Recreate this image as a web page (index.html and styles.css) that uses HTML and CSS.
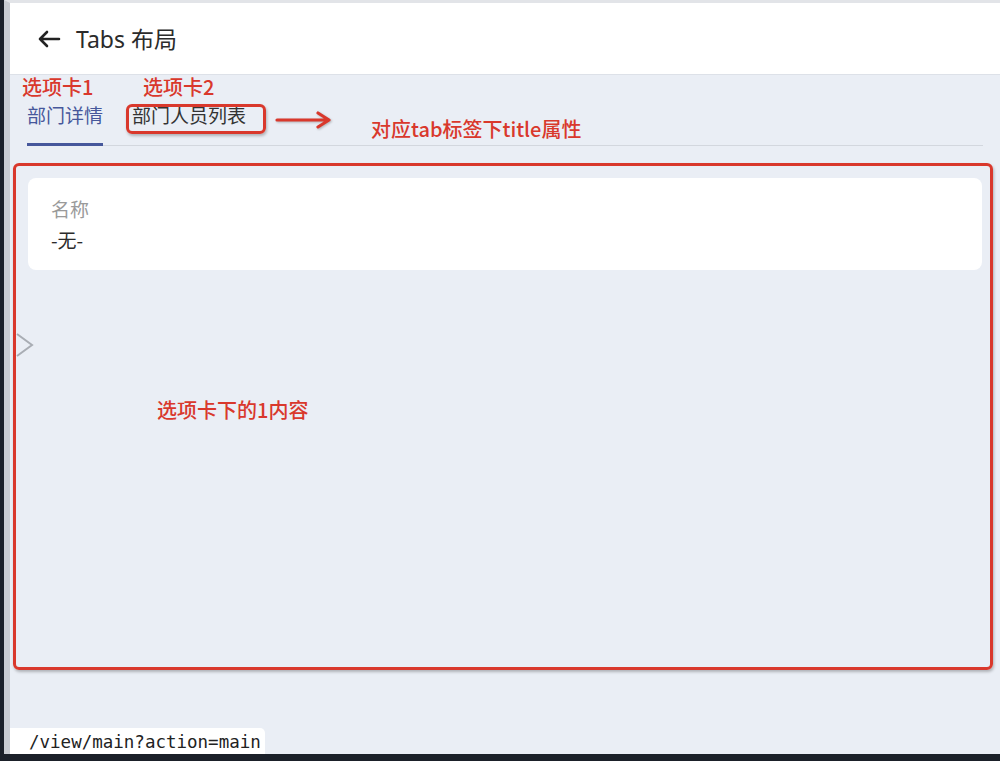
FILE: index.html
```html
<!DOCTYPE html>
<html lang="zh">
<head>
<meta charset="utf-8">
<title>Tabs 布局</title>
<link rel="stylesheet" href="styles.css">
</head>
<body>
<div class="app">
  <header class="header">
    <svg class="back" width="24" height="20" viewBox="0 0 24 20"><path d="M22 10H3M10 3L3 10l7 7" fill="none" stroke="#222" stroke-width="2.6" stroke-linecap="round" stroke-linejoin="round"/></svg>
    <span class="title">Tabs 布局</span>
  </header>
  <main class="main">
    <nav class="tabbar">
      <div class="tab active">部门详情</div>
      <div class="tab">部门人员列表</div>
    </nav>
    <section class="card">
      <div class="label">名称</div>
      <div class="value">-无-</div>
    </section>
  </main>

  <svg class="chevron" width="20" height="26" viewBox="0 0 20 26"><path d="M2 2l15 11L2 24" fill="none" stroke="#a9adb4" stroke-width="2"/></svg>

  <div class="note note-tab1">选项卡1</div>
  <div class="note note-tab2">选项卡2</div>
  <div class="box box-tab2"></div>
  <svg class="red-arrow" width="60" height="20" viewBox="0 0 60 20"><path d="M3 10H55M44 3l11 7-11 7" fill="none" stroke="#d9382c" stroke-width="3.2" stroke-linecap="round" stroke-linejoin="round"/></svg>
  <div class="note note-title">对应tab标签下title属性</div>
  <div class="box box-content"></div>
  <div class="note note-content">选项卡下的1内容</div>

  <div class="status">/view/main?action=main</div>
</div>
</body>
</html>
```
FILE: styles.css
```css
html, body {
  margin: 0;
  padding: 0;
}
body {
  width: 1000px;
  height: 761px;
  background: #1b2029;
  overflow: hidden;
  font-family: "Noto Sans", "Noto Sans CJK SC", sans-serif;
}
.app {
  position: relative;
  margin-left: 4px;
  border-left: 6px solid #c9ccd2;
  border-top: 3px solid #e2e4e8;
  height: 751px;
  background: #eaeef5;
  display: flex;
  flex-direction: column;
}
.header {
  height: 71px;
  background: #fff;
  border-bottom: 1px solid #dde1e8;
  display: flex;
  align-items: center;
  padding-left: 27px;
  gap: 15px;
}
.back {
  display: block;
  margin-top: 1px;
}
.title {
  font-size: 23px;
  color: #2b2b2b;
  font-family: "Noto Sans", "Noto Sans CJK SC", sans-serif;
  margin-top: -1px;
}
.main {
  flex: 1;
  padding-top: 25px;
}
.tabbar {
  display: flex;
  gap: 29px;
  margin: 0 17px;
  border-bottom: 1px solid #d3d7de;
}
.tab {
  font-family: "Noto Sans CJK SC", sans-serif;
  font-size: 19px;
  line-height: 26px;
  padding: 2px 0 15px;
  color: #333;
  border-bottom: 3px solid transparent;
  margin-bottom: -1px;
}
.tab.active {
  color: #46579b;
  border-bottom-color: #46579b;
}
.card {
  margin: 32px 18px 0;
  background: #fff;
  border-radius: 8px;
  padding: 16px 23px 15px;
  font-family: "Noto Sans CJK SC", sans-serif;
}
.label {
  font-size: 19px;
  line-height: 30px;
  color: #9a9a9a;
}
.value {
  font-size: 19px;
  line-height: 31px;
  color: #2b2b2b;
}
.chevron {
  position: absolute;
  left: 5px;
  top: 329px;
}
.note {
  position: absolute;
  color: #d9382c;
  font-family: "Noto Sans CJK SC", sans-serif;
  font-weight: 500;
  font-size: 20px;
  line-height: 24px;
  white-space: nowrap;
}
.note-tab1 { left: 12px; top: 72px; }
.note-tab2 { left: 133px; top: 72px; }
.note-title { left: 361px; top: 114px; }
.note-content { left: 147px; top: 395px; }
.box {
  position: absolute;
  border: 3px solid #d9382c;
  border-radius: 6px;
  box-shadow: 1px 2px 3px rgba(0,0,0,0.25);
}
.box-tab2 {
  left: 116px;
  top: 101px;
  width: 134px;
  height: 24px;
}
.box-content {
  left: 3px;
  top: 160px;
  width: 974px;
  height: 501px;
}
.red-arrow {
  position: absolute;
  left: 264px;
  top: 107px;
  filter: drop-shadow(1px 1px 1px rgba(0,0,0,0.25));
}
.status {
  position: absolute;
  left: 0;
  bottom: 0;
  width: 236px;
  height: 26px;
  padding-left: 19px;
  background: #fff;
  border-top-right-radius: 5px;
  font-family: "DejaVu Sans Mono", monospace;
  font-size: 17.5px;
  line-height: 28px;
  color: #222;
}
```
